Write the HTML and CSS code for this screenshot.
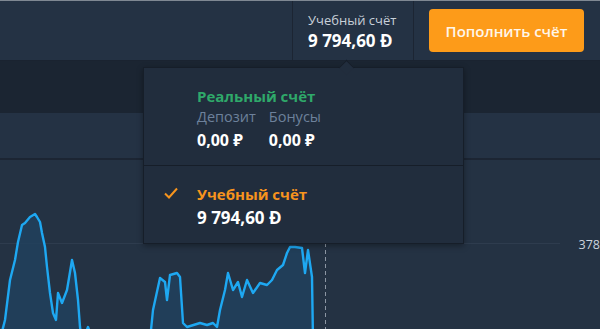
FILE: index.html
```html
<!DOCTYPE html>
<html lang="ru">
<head>
<meta charset="utf-8">
<link rel="stylesheet" href="styles.css">
</head>
<body>
<header class="topbar">
  <div class="balance">
    <div class="balance-label">Учебный счёт</div>
    <div class="balance-value">9 794,60 Đ</div>
  </div>
  <button class="deposit-btn">Пополнить счёт</button>
</header>
<div class="band"></div>
<div class="row"></div>
<div class="chart">
  <svg class="chart-svg" viewBox="0 160 600 169" width="600" height="169" preserveAspectRatio="none">
    <line x1="0" y1="243.5" x2="560" y2="243.5" class="grid"/>
    <line x1="325.5" y1="243" x2="325.5" y2="329" class="now"/>
    <polygon class="area" points="0,329 5,320 10,280 15,260 18,242 22,225 25,223 30,217 35,214 37,217 40,222 42,233 45,247 47,267 50,293 53,313 56,320 58,293 62,303 67,290 72,260 75,273 78,300 80,327 82,332 150,332 153,310 160,278 165,282 167,300 170,275 177,273 180,277 183,323 187,327 200,323 207,325 213,323 217,327 220,310 225,290 228,273 233,290 238,282 242,297 247,280 253,293 260,283 267,285 272,280 277,270 283,265 287,253 290,247 295,247 302,248 305,273 308,250 312,277 313,332"/>
    <polyline class="line" points="0,340 5,320 10,280 15,260 18,242 22,225 25,223 30,217 35,214 37,217 40,222 42,233 45,247 47,267 50,293 53,313 56,320 58,293 62,303 67,290 72,260 75,273 78,300 80,327 82,340"/>
    <polyline class="line" points="85,335 88,327 91,335"/>
    <polyline class="line" points="150,340 153,310 160,278 165,282 167,300 170,275 177,273 180,277 183,323 187,327 200,323 207,325 213,323 217,327 220,310 225,290 228,273 233,290 238,282 242,297 247,280 253,293 260,283 267,285 272,280 277,270 283,265 287,253 290,247 295,247 302,248 305,273 308,250 312,277 313,340"/>
  </svg>
  <span class="price-label">378</span>
</div>

<div class="dropdown">
  <div class="dd-section">
    <div class="dd-title real">Реальный счёт</div>
    <div class="dd-cols">
      <div class="dd-col">
        <div class="dd-label">Депозит</div>
        <div class="dd-amount">0,00 ₽</div>
      </div>
      <div class="dd-col">
        <div class="dd-label">Бонусы</div>
        <div class="dd-amount">0,00 ₽</div>
      </div>
    </div>
  </div>
  <div class="dd-section dd-active">
    <svg class="check" viewBox="0 0 14 12" width="14" height="12"><path d="M1 6.5 L5 10.5 L13 1.5" fill="none" stroke="#f7941d" stroke-width="2"/></svg>
    <div class="dd-title demo">Учебный счёт</div>
    <div class="dd-amount big">9 794,60 Đ</div>
  </div>
</div>
</body>
</html>
```

FILE: styles.css
```css
* { box-sizing: border-box; }
html, body { margin: 0; padding: 0; }
body {
  width: 600px;
  height: 329px;
  overflow: hidden;
  background: #243243;
  font-family: "Open Sans", "Noto Sans", sans-serif;
  position: relative;
}
.topbar {
  height: 61px;
  background: #243244;
  border-top: 1px solid #7f8893;
  border-bottom: 1px solid #1a2330;
  display: flex;
  justify-content: flex-end;
  align-items: center;
  padding-right: 16px;
}
.balance {
  align-self: stretch;
  width: 122px;
  border-left: 1px solid #1c2533;
  border-right: 1px solid #1c2533;
  padding: 11px 0 0 15px;
  margin-right: 15px;
}
.balance-label {
  color: #c8d0d9;
  font-size: 13px;
  line-height: 16px;
}
.balance-value {
  color: #ffffff;
  font-size: 17px;
  font-weight: 700;
  line-height: 22px;
  margin-top: 2px;
}
.deposit-btn {
  width: 155px;
  height: 43px;
  background: #fd9b19;
  border: none;
  border-radius: 4px;
  color: #fff6ea;
  font-family: inherit;
  font-size: 15px;
  font-weight: 600;
  padding: 0;
}
.band {
  height: 52px;
  background: #1b2532;
}
.row {
  height: 47px;
  background: #243244;
  border-bottom: 2px solid #1c2533;
}
.chart {
  height: 169px;
  position: relative;
}
.chart-svg { display: block; }
.grid { stroke: #2e3c4e; stroke-width: 1; }
.now { stroke: #8c96a3; stroke-width: 1; stroke-dasharray: 4 3; }
.area { fill: #20415f; opacity: 0.8; }
.line { fill: none; stroke: #1ea8f2; stroke-width: 2.4; stroke-linejoin: round; }
.price-label {
  position: absolute;
  right: 0;
  top: 78px;
  color: #ccd3dc;
  font-size: 12.5px;
  line-height: 14px;
}
.dropdown {
  position: absolute;
  left: 143px;
  top: 67px;
  width: 321px;
  height: 177px;
  background: #212d3d;
  border: 1px solid #161e29;
  box-shadow: 0 2px 6px rgba(0,0,0,0.35);
}
.dropdown::before {
  content: "";
  position: absolute;
  left: 197px;
  top: -6px;
  width: 10px;
  height: 10px;
  background: #212d3d;
  border-left: 1px solid #161e29;
  border-top: 1px solid #161e29;
  transform: rotate(45deg);
}
.dd-section {
  padding: 17px 0 0 53px;
  height: 98px;
  border-bottom: 1px solid #161e29;
  position: relative;
}
.dd-section.dd-active {
  height: auto;
  border-bottom: none;
  padding-top: 17px;
}
.dd-title {
  font-size: 15px;
  font-weight: 700;
  line-height: 22px;
}
.real { color: #2fa96a; }
.demo { color: #f7941d; }
.dd-cols { display: flex; gap: 13px; }
.dd-label {
  color: #6d819b;
  font-size: 14.5px;
  line-height: 20px;
}
.dd-amount {
  color: #ffffff;
  font-size: 16px;
  font-weight: 700;
  line-height: 26px;
}
.dd-amount.big { font-size: 17px; line-height: 26px; }
.check {
  position: absolute;
  left: 20px;
  top: 21px;
}
```
